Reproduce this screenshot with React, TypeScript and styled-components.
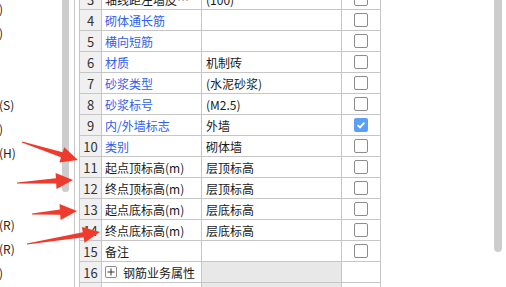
import React, {FC} from 'react';
import styled, {createGlobalStyle} from 'styled-components';

const GlobalStyle = createGlobalStyle`
  html, body {
    margin: 0;
    padding: 0;
    overflow: hidden;
    background: #fff;
  }
  body {
    font-family: "Noto Sans CJK SC", "Noto Sans", sans-serif;
    color: #222;
  }
`

interface IRow {
  num: number
  name: string
  value?: string
  blue?: boolean
  checked?: boolean
  group?: boolean
}

const rows: IRow[] = [
  {num: 3, name: '轴线距左墙皮距离(mm)', value: '(100)'},
  {num: 4, name: '砌体通长筋', blue: true},
  {num: 5, name: '横向短筋', blue: true},
  {num: 6, name: '材质', value: '机制砖', blue: true},
  {num: 7, name: '砂浆类型', value: '(水泥砂浆)', blue: true},
  {num: 8, name: '砂浆标号', value: '(M2.5)', blue: true},
  {num: 9, name: '内/外墙标志', value: '外墙', blue: true, checked: true},
  {num: 10, name: '类别', value: '砌体墙', blue: true},
  {num: 11, name: '起点顶标高(m)', value: '层顶标高'},
  {num: 12, name: '终点顶标高(m)', value: '层顶标高'},
  {num: 13, name: '起点底标高(m)', value: '层底标高'},
  {num: 14, name: '终点底标高(m)', value: '层底标高'},
  {num: 15, name: '备注'},
  {num: 16, name: '钢筋业务属性', group: true},
  {num: 17, name: '土建业务属性', group: true},
]

// tails of the tree labels, clipped by the splitter
const treeItems = [')', ')', '', '', '(S)', ')', '(H)', '', '', '(R)', '(R)', ')']

const arrows = [
  {tx: 22, ty: 142, px: 78, py: 160},
  {tx: 17, ty: 183, px: 73, py: 180},
  {tx: 32, ty: 214, px: 77, py: 211},
  {tx: 27, ty: 244, px: 100, py: 232},
]

const arrowPoints = (tx: number, ty: number, px: number, py: number) => {
  const len = Math.hypot(px - tx, py - ty)
  const dx = (px - tx) / len
  const dy = (py - ty) / len
  const nx = -dy
  const ny = dx
  const head = 17
  const half = 8
  const neck = 2.6
  const cx = px - dx * head
  const cy = py - dy * head
  const pts = [
    [tx + nx * 0.6, ty + ny * 0.6],
    [cx + nx * neck, cy + ny * neck],
    [cx + nx * half, cy + ny * half],
    [px, py],
    [cx - nx * half, cy - ny * half],
    [cx - nx * neck, cy - ny * neck],
    [tx - nx * 0.6, ty - ny * 0.6],
  ]
  return pts.map(p => p.map(v => v.toFixed(1)).join(',')).join(' ')
}

const CheckMark: FC<{checked?: boolean}> = ({checked}) => (
  <CheckBox $checked={checked}>
    {checked && (
      <svg width="10" height="10" viewBox="0 0 10 10">
        <path d="M1.6 5.2 L4 7.4 L8.4 2.6" fill="none" stroke="#fff" strokeWidth="1.8"/>
      </svg>
    )}
  </CheckBox>
)

const PlusIcon = () => (
  <PlusBox>
    <svg width="8" height="8" viewBox="0 0 8 8">
      <path d="M0.5 4 H7.5 M4 0.5 V7.5" stroke="#333" strokeWidth="1"/>
    </svg>
  </PlusBox>
)

export default function App() {
  return (
    <>
      <GlobalStyle/>
      <Screen>
        <TreePane>
          {treeItems.map((t, i) => <TreeItem key={i}>{t}</TreeItem>)}
        </TreePane>
        <LeftScroll><LeftThumb/></LeftScroll>
        <Gap/>
        <PropPanel>
          <Grid>
            {rows.map(r => (
              <React.Fragment key={r.num}>
                <NumCell>{r.num}</NumCell>
                <NameCell $blue={r.blue}>
                  {r.group && <PlusIcon/>}
                  <NameText $group={r.group}>{r.name}</NameText>
                </NameCell>
                <ValueCell $group={r.group}>{r.value}</ValueCell>
                <CheckCell>{!r.group && <CheckMark checked={r.checked}/>}</CheckCell>
              </React.Fragment>
            ))}
          </Grid>
          <Blank/>
          <RightScroll><RightThumb/></RightScroll>
        </PropPanel>
        <Overlay width="506" height="287" viewBox="0 0 506 287">
          {arrows.map((a, i) => (
            <polygon key={i} points={arrowPoints(a.tx, a.ty, a.px, a.py)} fill="#ef3b2d"/>
          ))}
        </Overlay>
      </Screen>
    </>
  )
}

const Screen = styled.div`
  position: relative;
  width: 506px;
  height: 287px;
  display: flex;
  overflow: hidden;
  background: #fff;
`
const TreePane = styled.div`
  width: 62px;
  flex-shrink: 0;
  display: flex;
  flex-direction: column;
  margin-top: -4px;
  overflow: hidden;
`
const TreeItem = styled.div`
  height: 24px;
  flex-shrink: 0;
  display: flex;
  align-items: center;
  margin-left: -1px;
  font-size: 12px;
  color: #222;
  white-space: nowrap;
`
const LeftScroll = styled.div`
  width: 7px;
  flex-shrink: 0;
`
const LeftThumb = styled.div`
  height: 192px;
  background: #cdcdcd;
  border-radius: 0 0 3px 3px;
`
const Gap = styled.div`
  width: 5px;
  flex-shrink: 0;
`
const PropPanel = styled.div`
  flex: 1;
  display: flex;
  border-left: 1px solid #c6c6c6;
  padding-left: 4px;
  min-width: 0;
`
const Grid = styled.div`
  display: grid;
  grid-template-columns: 22px 100px 140px 39px;
  grid-auto-rows: 21px;
  align-content: start;
  margin-top: -11px;
  border-left: 1px solid #c6c6c6;
  font-size: 12px;
`
const Cell = styled.div`
  box-sizing: border-box;
  border-right: 1px solid #c6c6c6;
  border-bottom: 1px solid #c6c6c6;
  display: flex;
  align-items: center;
  overflow: hidden;
  white-space: nowrap;
`
const NumCell = styled(Cell)`
  justify-content: center;
  background: #f0f0f0;
  font-size: 13px;
  color: #333;
`
const NameCell = styled(Cell)<{$blue?: boolean}>`
  padding-left: 3px;
  color: ${p => p.$blue ? '#2f5ef0' : '#1a1a1a'};
`
const NameText = styled.span<{$group?: boolean}>`
  overflow: hidden;
  text-overflow: ellipsis;
  margin-left: ${p => p.$group ? '6px' : '0'};
`
const ValueCell = styled(Cell)<{$group?: boolean}>`
  padding-left: 4px;
  background: ${p => p.$group ? '#e8e8e8' : '#fff'};
  color: #1a1a1a;
`
const CheckCell = styled(Cell)`
  justify-content: center;
`
const CheckBox = styled.div<{$checked?: boolean}>`
  box-sizing: border-box;
  width: 14px;
  height: 14px;
  border-radius: 2px;
  border: ${p => p.$checked ? 'none' : '1.5px solid #8c8c8c'};
  background: ${p => p.$checked ? '#5ba0f6' : '#fff'};
  display: grid;
  place-items: center;
`
const PlusBox = styled.div`
  box-sizing: border-box;
  width: 12px;
  height: 12px;
  border: 1px solid #8c8c8c;
  border-radius: 2px;
  display: grid;
  place-items: center;
  flex-shrink: 0;
`
const Blank = styled.div`
  flex: 1;
`
const RightScroll = styled.div`
  width: 8px;
  margin-right: 4px;
  flex-shrink: 0;
`
const RightThumb = styled.div`
  height: 252px;
  background: #cdcdcd;
  border-radius: 0 0 4px 4px;
`
const Overlay = styled.svg`
  position: absolute;
  left: 0;
  top: 0;
  pointer-events: none;
`
